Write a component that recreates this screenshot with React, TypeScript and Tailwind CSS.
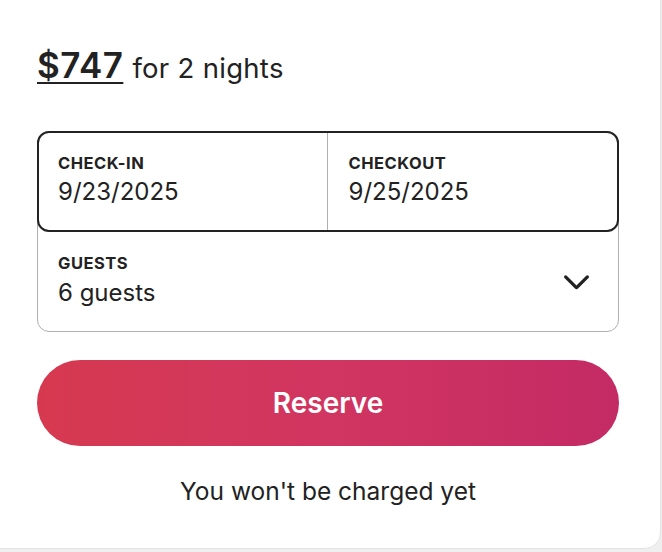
import React from "react";

export default function App() {
  return (
    <div className="w-[662px] h-[552px] bg-[#efefef] overflow-hidden" style={{ fontFamily: "Inter, 'Noto Sans', sans-serif" }}>
      <div className="w-[681px] h-[569px] -mt-[20px] -ml-[20px] pl-[56px] pr-[41px] pt-[64px] bg-white rounded-2xl border border-[#e3e3e3] text-[#222222]">
        <div className="flex items-baseline gap-[9px] h-[40px]">
          <span className="text-[35px] leading-[40px] font-semibold underline decoration-2 underline-offset-[4px] tracking-[0.5px]">$747</span>
          <span className="text-[27.5px] leading-[40px] font-normal tracking-[0.3px]">for 2 nights</span>
        </div>
        <div className="mt-[46px] rounded-[12px] border border-[#b0b0b0]">
          <div className="flex h-[101px] -m-px rounded-[12px] border-2 border-[#222222]">
            <div className="flex-1 pl-[19px] pt-[20px] border-r border-[#b0b0b0]">
              <div className="text-[16.5px] font-bold leading-[20px] tracking-[0.5px]">CHECK-IN</div>
              <div className="text-[24px] leading-[28px] mt-[5px]">9/23/2025</div>
            </div>
            <div className="flex-1 pl-[21px] pt-[20px]">
              <div className="text-[16.5px] font-bold leading-[20px] tracking-[0.5px]">CHECKOUT</div>
              <div className="text-[24px] leading-[28px] mt-[5px]">9/25/2025</div>
            </div>
          </div>
          <div className="flex items-start justify-between h-[100px] pl-[20px] pr-[27px]">
            <div className="pt-[22px]">
              <div className="text-[16.5px] font-bold leading-[20px] tracking-[0.5px]">GUESTS</div>
              <div className="text-[24px] leading-[28px] mt-[6px]">6 guests</div>
            </div>
            <svg width="29" height="29" viewBox="0 0 32 32" fill="none" stroke="#222222" strokeWidth="3.6" strokeLinecap="round" strokeLinejoin="round" className="mt-[35px]">
              <path d="M28 12 16.7 23.3a1 1 0 0 1-1.4 0L4 12" />
            </svg>
          </div>
        </div>
        <button className="mt-[28px] w-full h-[86px] rounded-full bg-gradient-to-r from-[#d6394f] via-[#d13561] to-[#c42a64] text-white text-[28px] font-semibold">
          Reserve
        </button>
        <div className="mt-[30px] text-center text-[24.5px] leading-[30px]">You won't be charged yet</div>
      </div>
    </div>
  );
}
